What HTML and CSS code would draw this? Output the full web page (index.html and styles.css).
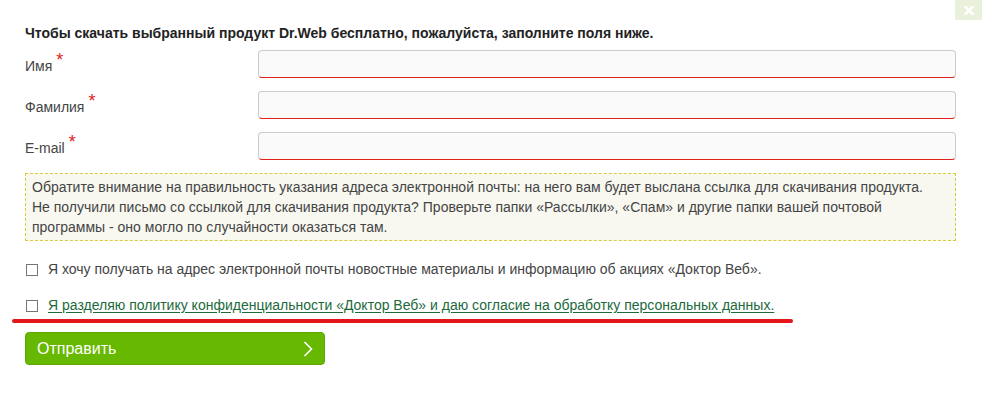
FILE: index.html
```html
<!DOCTYPE html>
<html lang="ru">
<head>
    <meta charset="UTF-8">
    <meta name="viewport" content="width=device-width, initial-scale=1.0">
    <title>Dr.Web</title>
    <link rel="stylesheet" href="styles.css">
</head>
<body>
    <a class="close" href="#" title="Закрыть">
        <svg width="10" height="9" viewBox="0 0 10 9">
            <path d="M1.5 1 L8.5 8 M8.5 1 L1.5 8" stroke="#fff" stroke-width="2.6" stroke-linecap="square"/>
        </svg>
    </a>

    <form class="download_form">
        <p class="form_title">Чтобы скачать выбранный продукт Dr.Web бесплатно, пожалуйста, заполните поля ниже.</p>

        <div class="form_row">
            <label class="form_label" for="f_name">Имя<span class="req">*</span></label>
            <input class="form_input" id="f_name" type="text">
        </div>
        <div class="form_row">
            <label class="form_label" for="f_surname">Фамилия<span class="req">*</span></label>
            <input class="form_input" id="f_surname" type="text">
        </div>
        <div class="form_row">
            <label class="form_label" for="f_email">E-mail<span class="req">*</span></label>
            <input class="form_input" id="f_email" type="text">
        </div>

        <div class="notice">
            Обратите внимание на правильность указания адреса электронной почты: на него вам будет выслана ссылка для скачивания продукта.<br>
            Не получили письмо со ссылкой для скачивания продукта? Проверьте папки «Рассылки», «Спам» и другие папки вашей почтовой<br>
            программы - оно могло по случайности оказаться там.
        </div>

        <label class="check_row">
            <span class="check_box"></span>
            <span>Я хочу получать на адрес электронной почты новостные материалы и информацию об акциях «Доктор Веб».</span>
        </label>
        <label class="check_row check_row_second">
            <span class="check_box"></span>
            <a class="policy_link" href="#">Я разделяю политику конфиденциальности «Доктор Веб» и даю согласие на обработку персональных данных.</a>
        </label>

        <!-- red marker line under the policy checkbox -->
        <div class="marker"></div>

        <button class="submit_btn" type="button">
            <span>Отправить</span>
            <svg width="10" height="16" viewBox="0 0 10 16">
                <path d="M1.5 1 L8.5 8 L1.5 15" fill="none" stroke="#fff" stroke-width="1.6"/>
            </svg>
        </button>
    </form>
</body>
</html>
```

FILE: styles.css
```css
body {
    margin: 0;
    padding: 0;
    background-color: #fff;
    font-family: "Liberation Sans", Arial, Helvetica, sans-serif;
    font-size: 14px;
    color: #444;
}

.close {
    position: absolute;
    top: 0;
    right: 0;
    width: 27px;
    height: 20px;
    background-color: #e9f1dc;
    display: flex;
    align-items: center;
    justify-content: center;
}

.download_form {
    width: 931px;
    padding: 24px 0 0 25px;
}

.form_title {
    margin: 0 0 8px 0;
    line-height: 18px;
    font-weight: bold;
    color: #222;
}

.form_row {
    display: flex;
    align-items: center;
    height: 28px;
    margin-bottom: 13px;
}

.form_label {
    width: 233px;
    flex-shrink: 0;
    padding-bottom: 5px;
    color: #444;
}

.req {
    color: #e2211c;
    font-size: 18px;
    margin-left: 4px;
    vertical-align: 5px;
}

.form_input {
    width: 698px;
    height: 28px;
    box-sizing: border-box;
    margin: 0;
    border: 1px solid #cccccc;
    border-bottom: 1px solid #e3211c;
    border-radius: 4px;
    background-color: #fafafa;
    outline: none;
}

.notice {
    border: 1px dashed #d8cc3c;
    background-color: #f8f8f1;
    padding: 3px 6px;
    line-height: 20px;
    color: #444;
}

.check_row {
    display: flex;
    align-items: center;
    line-height: 20px;
    margin-top: 18px;
    color: #444;
}

.check_row_second {
    margin-top: 16px;
}

.check_box {
    width: 10px;
    height: 10px;
    border: 1px solid #777;
    margin: 1px 10px 0 1px;
    flex-shrink: 0;
    background-color: #fff;
}

.policy_link {
    color: #1c6a3c;
    text-decoration: underline;
    text-underline-offset: 2px;
}

.marker {
    width: 781px;
    height: 4px;
    margin: 4px 0 0 -13px;
    border-radius: 2px;
    background-color: #e3161b;
}

.submit_btn {
    display: flex;
    align-items: center;
    justify-content: space-between;
    width: 300px;
    height: 33px;
    margin-top: 9px;
    padding: 0 11px 0 11px;
    border: 1px solid #5ea800;
    border-radius: 4px;
    background-color: #66b800;
    color: #fff;
    font-family: "Liberation Sans", Arial, sans-serif;
    font-size: 16px;
    cursor: pointer;
}
```
